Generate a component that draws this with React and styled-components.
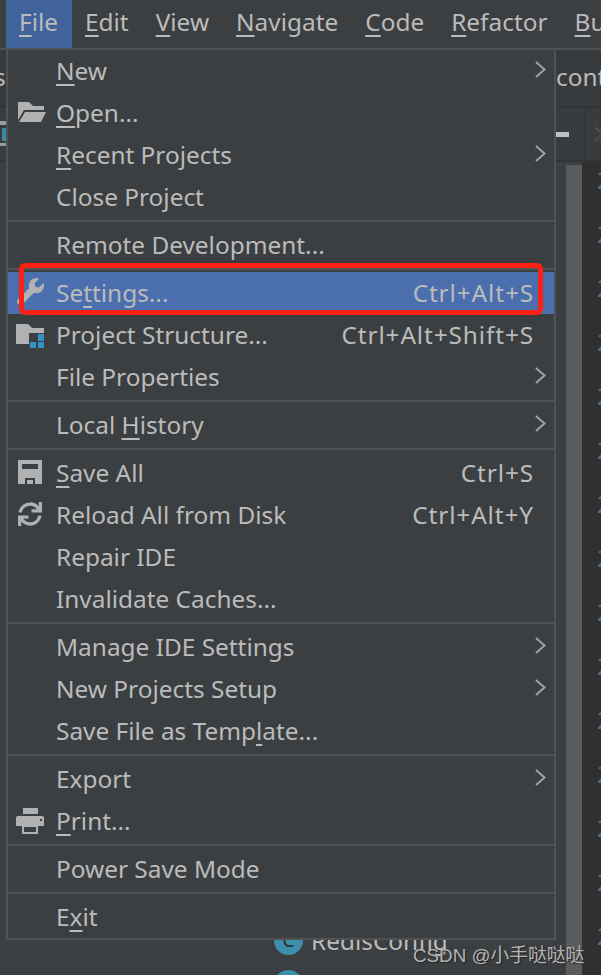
import React from "react";
import styled, { createGlobalStyle } from "styled-components";
import { FaWrench, FaSync } from "react-icons/fa";

const GlobalStyle = createGlobalStyle`
  html, body {
    margin: 0;
    padding: 0;
    background: #3c3f41;
  }
`;

const Page = styled.div`
  position: relative;
  width: 601px;
  height: 975px;
  overflow: hidden;
  background: #3c3f41;
  color: #bbbbbb;
  font-family: "Noto Sans", "Open Sans", sans-serif;
  font-size: 24.4px;
`;

const MenuBar = styled.div`
  display: flex;
  height: 48px;
  padding-left: 6px;
  border-bottom: 2px solid #505254;
`;

const BarItem = styled.div`
  flex-shrink: 0;
  padding: 0 14px 0 13px;
  line-height: 43px;
  background: ${p => (p.$active ? "#41639c" : "transparent")};
`;

const Key = styled.span`
  text-decoration: underline;
  text-decoration-thickness: 2px;
  text-underline-offset: 4px;
  text-decoration-skip-ink: none;
`;

const Breadcrumbs = styled.div`
  display: flex;
  justify-content: space-between;
  height: 56px;
  line-height: 54px;
  background: #383b3d;
  border-bottom: 2px solid #323436;
`;

const Crumb = styled.span`
  margin-left: ${p => p.$offset}px;
  white-space: nowrap;
  width: ${p => p.$width}px;
  overflow: hidden;
`;

const ToolRow = styled.div`
  display: flex;
  align-items: center;
  justify-content: space-between;
  height: 52px;
  background: #393c3e;
  border-bottom: 2px solid #323436;
`;

const ToolRight = styled.div`
  display: flex;
  align-items: center;
  width: 45px;
  height: 100%;
`;

const Dash = styled.div`
  width: 14px;
  height: 5px;
  background: #c0c0c0;
`;

const ToolDivider = styled.div`
  width: 2px;
  height: 100%;
  margin: 0 9px 0 15px;
  background: #353739;
`;

const Body = styled.div`
  display: flex;
  height: 815px;
`;

const Tree = styled.div`
  flex: 1;
  display: flex;
  flex-direction: column;
  padding-top: 756px;
`;

const TreeRow = styled.div`
  flex-shrink: 0;
  display: flex;
  align-items: center;
  gap: 8px;
  height: 44px;
  padding-left: 274px;
`;

const ClassBadge = styled.div`
  flex-shrink: 0;
  width: 29px;
  height: 29px;
  border-radius: 50%;
  background: #3d8fad;
  color: #2b2d2f;
  font-size: 20px;
  line-height: 27px;
  text-align: center;
`;

const Scrollbar = styled.div`
  width: 16px;
  margin-top: 3px;
  background: #595b5d;
`;

const Gutter = styled.div`
  width: 19px;
  overflow: hidden;
  background: #2e3032;
  color: #5f6b7c;
  line-height: 54px;
`;

const GutterNumbers = styled.div`
  margin: -9px 0 0 15px;
`;

const Popup = styled.div`
  position: absolute;
  left: 6px;
  top: 48px;
  width: 546px;
  background: #3c3f41;
  border: 2px solid #505254;
`;

const Row = styled.div`
  position: relative;
  display: flex;
  align-items: center;
  height: 42px;
  padding: 0 20px 0 48px;
  background: ${p => (p.$selected ? "#4b6eaf" : "transparent")};
`;

const IconSlot = styled.div`
  position: absolute;
  left: ${p => p.$left}px;
  top: ${p => p.$top}px;
  display: flex;
  color: #afb1b3;
`;

const Label = styled.span`
  flex: 1;
  margin-top: -2px;
  white-space: nowrap;
`;

const Shortcut = styled.span`
  margin-top: -2px;
  letter-spacing: 0.88px;
  white-space: nowrap;
`;

const Arrow = styled.svg`
  width: 11px;
  height: 17px;
  margin: -4px -12px 0 0;
  fill: none;
  stroke: #a0a2a4;
  stroke-width: 2;
`;

const Separator = styled.div`
  height: 2px;
  margin: 2px 0;
  background: #505254;
`;

const RedFrame = styled.div`
  position: absolute;
  left: 19px;
  top: 263px;
  width: 514px;
  height: 42px;
  border: 5px solid #ff1f13;
  border-radius: 6px;
`;

const Watermark = styled.div`
  position: absolute;
  left: 413px;
  top: 942px;
  font-family: "Liberation Sans", "Noto Sans CJK SC", sans-serif;
  font-size: 18.8px;
  line-height: 28px;
  color: #b4b4b4;
  text-shadow: 1px 1px 1px #222;
  white-space: nowrap;
`;

// "_" marks the mnemonic letter
const Mnemonic = ({ text }) => {
  const i = text.indexOf("_");
  if (i < 0) return text;
  return (
    <>
      {text.slice(0, i)}
      <Key>{text[i + 1]}</Key>
      {text.slice(i + 2)}
    </>
  );
};

const FolderOpenIcon = () => (
  <svg width="28" height="20" viewBox="0 0 28 20" fill="currentColor">
    <path d="M0 0H11L15 4H26V8H6L0 18Z" />
    <path d="M7 10H28L23 20H1Z" />
  </svg>
);

const ProjectIcon = () => (
  <svg width="28" height="24" viewBox="0 0 28 24">
    <path fill="currentColor" d="M0 0H12L16 4H28V9H13V20H0Z" />
    <path fill="#3592c4" d="M22 10H28V17H22ZM14 18H20V24H14ZM22 18H28V24H22Z" />
  </svg>
);

const SaveIcon = () => (
  <svg width="24" height="24" viewBox="0 0 24 24">
    <path
      fill="currentColor"
      fillRule="evenodd"
      d="M0 0H24V24H0ZM4 4V9H20V4ZM7 18V24H17V18ZM9 20H15V24H9Z"
    />
  </svg>
);

const PrintIcon = () => (
  <svg width="28" height="26" viewBox="0 0 28 26">
    <path fill="currentColor" d="M7 0H22V6H7Z" />
    <path
      fill="currentColor"
      fillRule="evenodd"
      d="M2 8H26Q28 8 28 10V18H22V26H6V18H0V10Q0 8 2 8ZM8 19V24H20V19ZM24 11V13H26V11Z"
    />
  </svg>
);

const ChevronRight = () => (
  <Arrow viewBox="0 0 11 17">
    <path d="M1 1L9.5 8.5L1 16" />
  </Arrow>
);

const barItems = ["_File", "_Edit", "_View", "_Navigate", "_Code", "_Refactor", "_Build"];

const menuGroups = [
  [
    { text: "_New", more: true },
    { text: "_Open...", icon: <FolderOpenIcon />, left: 10, top: 10 },
    { text: "_Recent Projects", more: true },
    { text: "Close Project" }
  ],
  [{ text: "Remote Development..." }],
  [
    { text: "Se_ttings...", shortcut: "Ctrl+Alt+S", selected: true, icon: <FaWrench size={27} />, left: 9, top: 6 },
    { text: "Project Structure...", shortcut: "Ctrl+Alt+Shift+S", icon: <ProjectIcon />, left: 8, top: 10 },
    { text: "File Properties", more: true }
  ],
  [{ text: "Local _History", more: true }],
  [
    { text: "_Save All", shortcut: "Ctrl+S", icon: <SaveIcon />, left: 10, top: 8 },
    { text: "Reload All from Disk", shortcut: "Ctrl+Alt+Y", icon: <FaSync size={24} />, left: 10, top: 8 },
    { text: "Repair IDE" },
    { text: "Invalidate Caches..." }
  ],
  [
    { text: "Manage IDE Settings", more: true },
    { text: "New Projects Setup", more: true },
    { text: "Save File as Temp_late..." }
  ],
  [
    { text: "Export", more: true },
    { text: "_Print...", icon: <PrintIcon />, left: 8, top: 8 }
  ],
  [{ text: "Power Save Mode" }],
  [{ text: "E_xit" }]
];

const lineNumbers = Array.from({ length: 15 }, () => "2");

export default function App() {
  return (
    <Page>
      <GlobalStyle />
      <MenuBar>
        {barItems.map((item, i) => (
          <BarItem key={item} $active={i === 0}>
            <Mnemonic text={item} />
          </BarItem>
        ))}
      </MenuBar>

      <Breadcrumbs>
        <Crumb $offset={-6} $width={14}>s</Crumb>
        <Crumb $offset={0} $width={45}>controller</Crumb>
      </Breadcrumbs>
      <ToolRow>
        <svg width="7" height="26" viewBox="0 0 7 26">
          <path fill="#9a9da0" d="M0 0H6V4H0ZM0 22H6V25H0Z" />
          <path fill="#3a8aa5" d="M2 7H6V20H2Z" />
        </svg>
        <ToolRight>
          <Dash />
          <ToolDivider />
          <svg width="6" height="16" viewBox="0 0 6 16" fill="none" stroke="#4e5153" strokeWidth="2">
            <path d="M0 1L8 8L0 15" />
          </svg>
        </ToolRight>
      </ToolRow>

      <Body>
        <Tree>
          <TreeRow>
            <ClassBadge>C</ClassBadge>
            RedisConfig
          </TreeRow>
          <TreeRow>
            <ClassBadge>C</ClassBadge>
            RedisUtil
          </TreeRow>
        </Tree>
        <Scrollbar />
        <Gutter>
          <GutterNumbers>
            {lineNumbers.map((n, i) => (
              <div key={i}>{n}</div>
            ))}
          </GutterNumbers>
        </Gutter>
      </Body>

      <Popup>
        {menuGroups.map((group, g) => (
          <React.Fragment key={g}>
            {g > 0 && <Separator />}
            {group.map(item => (
              <Row key={item.text} $selected={item.selected}>
                {item.icon && (
                  <IconSlot $left={item.left} $top={item.top}>
                    {item.icon}
                  </IconSlot>
                )}
                <Label>
                  <Mnemonic text={item.text} />
                </Label>
                {item.shortcut && <Shortcut>{item.shortcut}</Shortcut>}
                {item.more && <ChevronRight />}
              </Row>
            ))}
          </React.Fragment>
        ))}
      </Popup>
      <RedFrame />
      <Watermark>CSDN @小手哒哒哒</Watermark>
    </Page>
  );
}
